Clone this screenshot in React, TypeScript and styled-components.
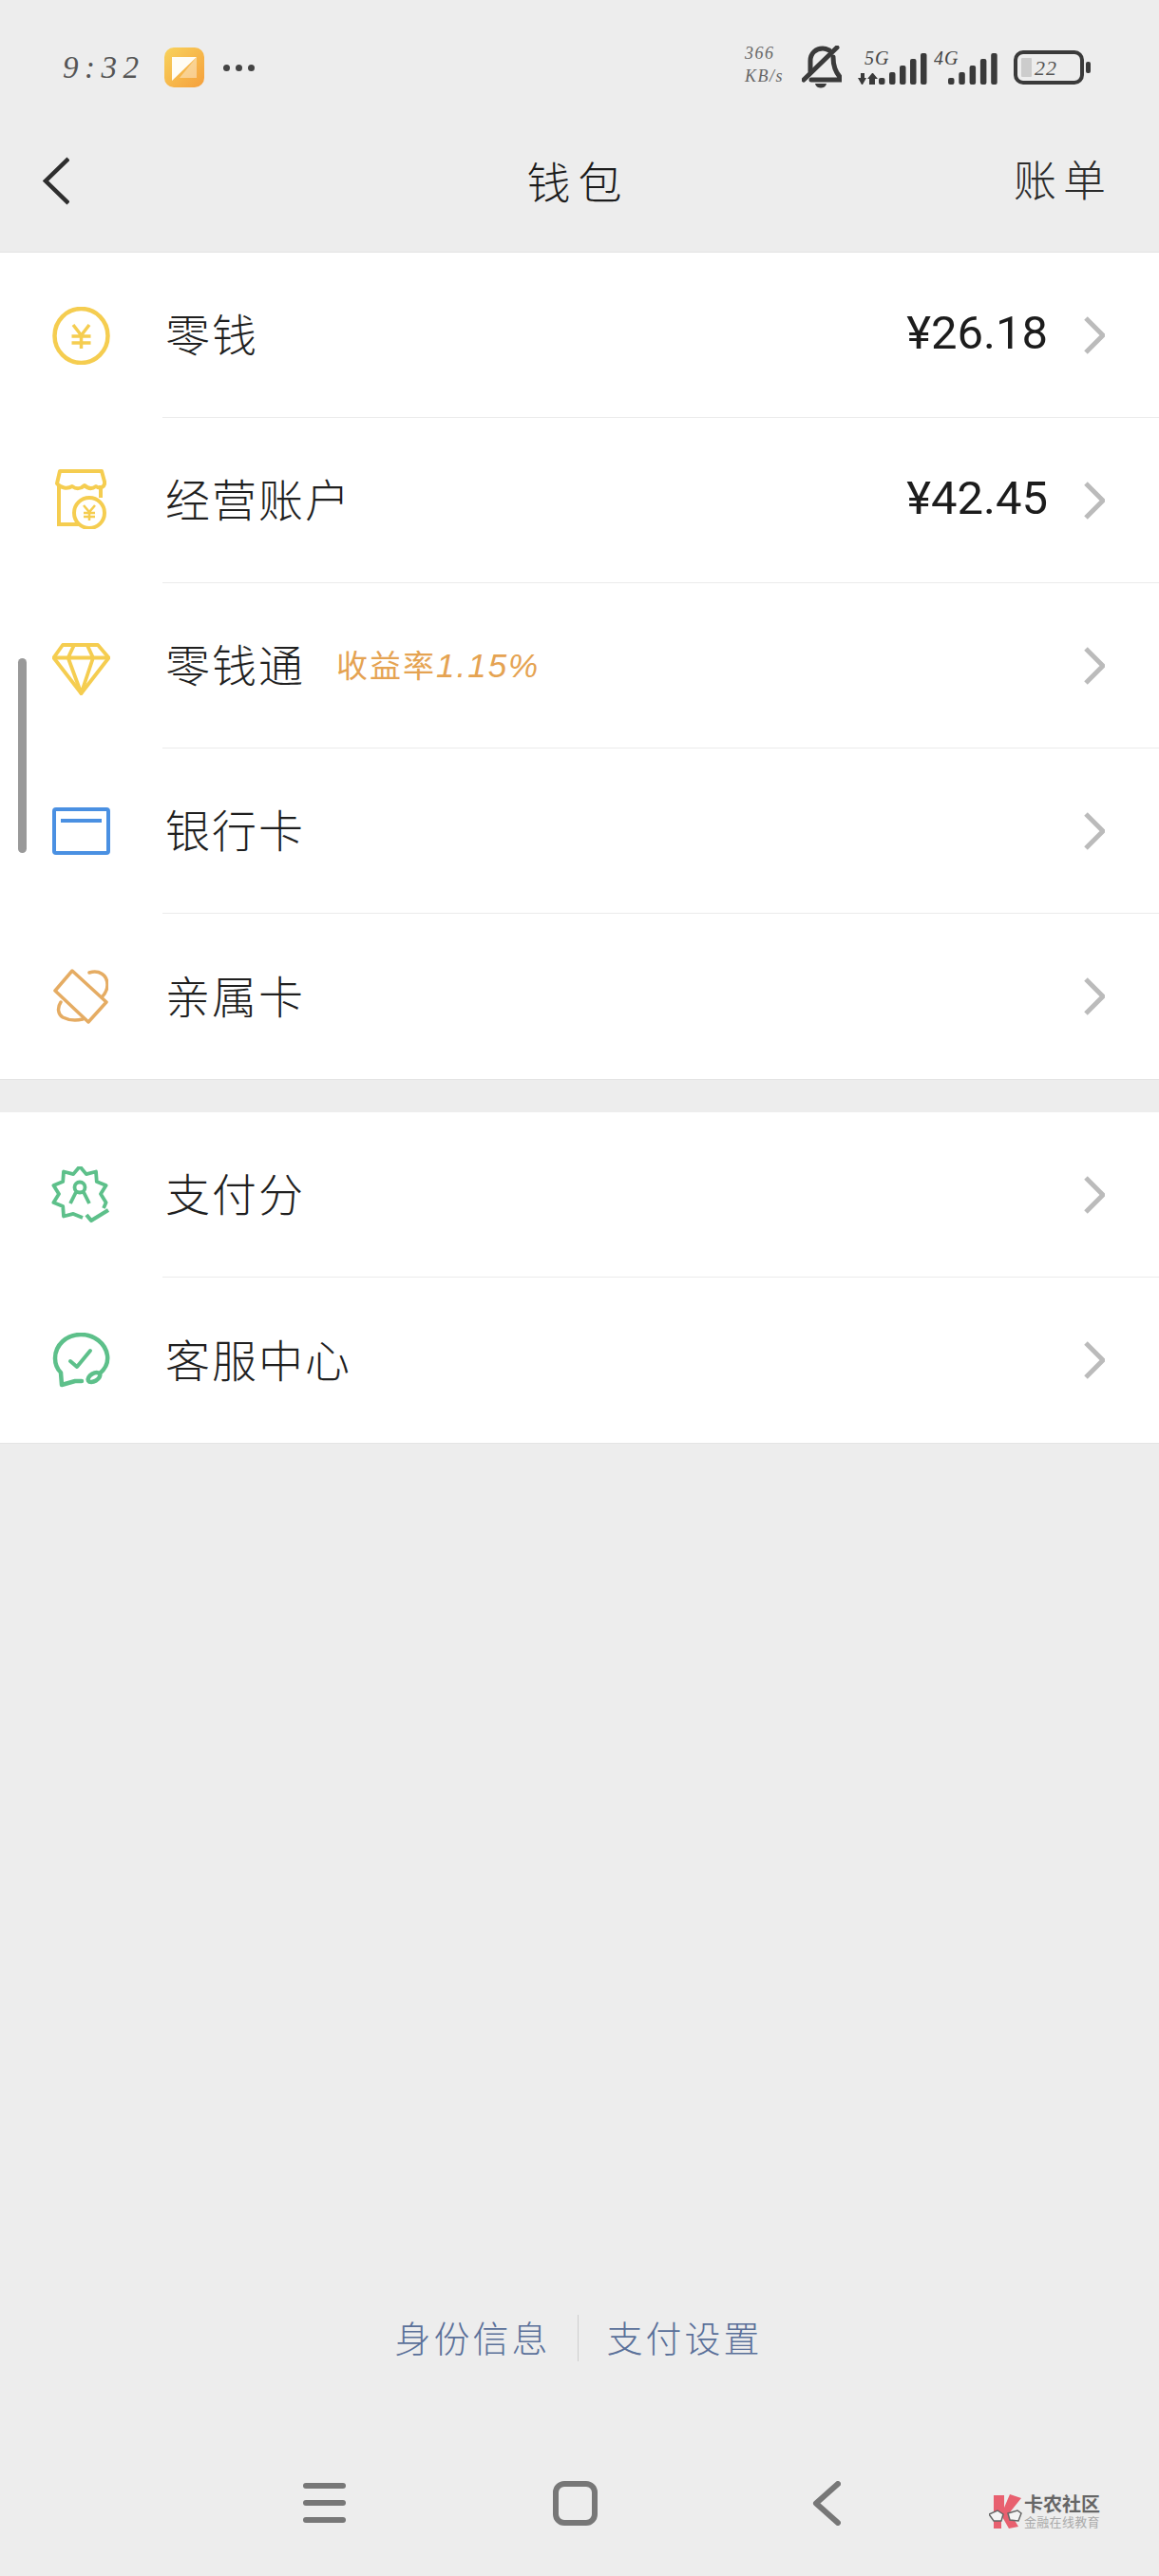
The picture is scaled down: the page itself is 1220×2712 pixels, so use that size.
import React from 'react'
import styled, { createGlobalStyle } from 'styled-components'

const cjk = '"Noto Sans CJK SC", "Noto Sans", sans-serif'

const Global = createGlobalStyle`
  html, body { margin: 0; padding: 0; background: #ededed; }
  * { box-sizing: border-box; }
`

const Page = styled.div`
  position: relative;
  width: 1220px; height: 2712px;
  display: flex; flex-direction: column;
  background: #ededed;
  font-family: ${cjk};
  overflow: hidden;
`

const StatusBar = styled.div`
  height: 124px; padding: 18px 72px 0 66px;
  display: flex; align-items: center; justify-content: space-between;
`

const StatusGroup = styled.div`
  display: flex; align-items: center;
`

const Clock = styled.span`
  font: italic 33px "Liberation Serif", serif;
  letter-spacing: 6.5px; color: #555; width: 107px; white-space: nowrap;
`

const Dots = styled.span`
  display: flex; gap: 6px; margin-left: 20px;
  i { width: 7px; height: 7px; border-radius: 50%; background: #444; }
`

const Speed = styled.div`
  width: 60px; margin-bottom: 6px;
  font: italic 18px/24px "Liberation Serif", serif;
  letter-spacing: 1.5px; color: #666;
  span { display: block; white-space: nowrap; }
`

const NavBar = styled.header`
  height: 142px; padding: 0 56px 8px 45px;
  display: grid; grid-template-columns: 1fr auto 1fr; align-items: center;
  border-bottom: 1px solid #e4e4e4;
`

const NavTitle = styled.h1`
  margin: 0 -8px 4px 0; font-size: 46px; font-weight: 300; letter-spacing: 8px; color: #1c1c1c;
`

const NavAction = styled.span`
  justify-self: end; margin: 0 -7px 6px 0;
  font-size: 45px; font-weight: 300; letter-spacing: 7px; color: #2b2b2b;
`

const Group = styled.section<{ $gap?: number }>`
  margin-top: ${(p) => p.$gap ?? 0}px;
  background: #fff;
  border-bottom: 1px solid #e4e4e4;
`

const Row = styled.div`
  height: 174px; display: flex; align-items: stretch;
`

const IconCell = styled.div<{ $nudge?: number }>`
  width: 171px; flex: none; padding-right: 1px;
  padding-top: ${(p) => Math.max(p.$nudge ?? 0, 0)}px;
  padding-bottom: ${(p) => Math.max(-(p.$nudge ?? 0), 0)}px;
  display: flex; align-items: center; justify-content: center;
`

const RowBody = styled.div<{ $last?: boolean }>`
  flex: 1; min-width: 0; padding-right: 57px;
  display: flex; align-items: center;
  border-bottom: ${(p) => (p.$last ? 'none' : '1px solid #ebebeb')};
`

const Label = styled.span`
  font-size: 47px; font-weight: 300; letter-spacing: 2px; color: #1f1f1f;
  padding: 0 0 6px 3px;
`

const Tag = styled.span`
  margin: 0 0 4px 33px; font-size: 33px; letter-spacing: 2px; color: #e5a352; font-weight: 400;
  em { font: italic 35px "Liberation Sans", sans-serif; letter-spacing: 2px; }
`

const Amount = styled.span`
  margin: 0 38px 4px auto;
  font: 400 49px Roboto, Inter, sans-serif; color: #1c1c1c;
`

const Chevron = styled.svg<{ $auto?: boolean }>`
  flex: none; width: 22px; height: 40px;
  margin-left: ${(p) => (p.$auto ? 'auto' : '0')};
`

const Footer = styled.footer`
  margin-top: auto; display: flex; flex-direction: column;
`

const LinkRow = styled.div`
  height: 49px; display: flex; align-items: center; justify-content: center;
  padding-right: 2px;
`

const FootLink = styled.a`
  font-size: 38px; letter-spacing: 3px; color: #5a7099; font-weight: 300; text-decoration: none;
  padding-bottom: 4px;
`

const Divider = styled.span`
  width: 1px; height: 49px; background: #cfcfcf; margin: 0 30px 0 28px;
`

const SystemBar = styled.nav`
  height: 100px; margin-top: 126px; padding-left: 319px;
  display: flex; align-items: flex-start; gap: 218px;
`

const Scrollbar = styled.div`
  position: absolute; left: 19px; top: 693px;
  width: 9px; height: 205px; border-radius: 5px; background: #999;
`

const Watermark = styled.div`
  position: absolute; left: 1041px; top: 2625px;
  display: flex; gap: 1px; align-items: center;
`

const MarkText = styled.div`
  display: flex; flex-direction: column;
  b { font-size: 20px; line-height: 22px; font-weight: 700; color: #666; white-space: nowrap; }
  span { font-size: 13px; line-height: 16px; color: #aaa; white-space: nowrap; letter-spacing: 0.3px; }
`

const SignalSvg = styled.svg<{ $gap: number }>`
  margin: 0 ${(p) => p.$gap}px 4px 0;
`

// badge outline: ten points, open at the lower right where the check sits
const STAR = (() => {
  const pts: string[] = ['33,54']
  for (let i = 0; i <= 15; i++) {
    const a = ((108 + i * 18) * Math.PI) / 180
    const r = i % 2 ? 29 : 22
    pts.push(`${(30 + r * Math.cos(a)).toFixed(1)},${(29 + r * Math.sin(a)).toFixed(1)}`)
  }
  pts.push('55,44')
  return pts
})()

const yellow = '#f5cd50'
const green = '#5dc08a'
const ink = '#3a3a3a'

const CoinIcon = () => (
  <svg width="61" height="61" viewBox="0 0 61 61" fill="none" stroke={yellow}>
    <ellipse cx="30.500" cy="30.500" rx="28" ry="28.500" strokeWidth="4.500" />
    <path d="M22 19l8.500 11 8.500-11M20.500 31h20M20.500 38h20M30.500 30v14" strokeWidth="3.500" />
  </svg>
)

const StoreIcon = () => (
  <svg width="54" height="63" viewBox="0 0 54 63" fill="none" stroke={yellow} strokeWidth="4">
    <path d="M5 2h44l3 11c1 6-5 8-9 5-4 3-8 3-12-1-4 4-9 4-13 1-5 3-12 2-16-3z" strokeLinejoin="round" />
    <path d="M4 16v42h24M48 17v13" />
    <circle cx="36" cy="46" r="16" fill="#fff" />
    <path d="M30 38l6 7 6-7M30 46h12M30 50h12M36 45v9" strokeWidth="2.500" />
  </svg>
)

const DiamondIcon = () => (
  <svg width="61" height="55" viewBox="0 0 61 55" fill="none" stroke={yellow} strokeWidth="3.800" strokeLinejoin="round">
    <path d="M11 2h37l11.500 13.500L30.500 53 1.500 15.500z" />
    <path d="M1.500 15.500h58M23 2l-6.300 13.500L30.500 53 43 15.500 36.700 2" />
  </svg>
)

const CardIcon = () => (
  <svg width="61" height="50" viewBox="0 0 61 50" fill="none" stroke="#4a90e2" strokeWidth="4">
    <rect x="2" y="2" width="57" height="46" rx="2" />
    <path d="M9 14h43" />
  </svg>
)

const ExclusiveIcon = () => (
  <svg width="58" height="58" viewBox="0 0 58 58" fill="none" stroke="#e5ac63" strokeWidth="3.500" strokeLinejoin="round" strokeLinecap="round">
    <path d="M20 2L2 23l35 33 19-21z" />
    <path d="M38 4c10-3 19 2 19 13 0 5-2 9-6 13M8 35c-4 6-3 13 2 16 6 3 13 4 21 2" />
  </svg>
)

const ScoreIcon = () => (
  <svg width="62" height="60" viewBox="0 0 62 60" fill="none" stroke={green} strokeWidth="3.800" strokeLinejoin="round">
    <polyline points={STAR.join(' ')} />
    <circle cx="30" cy="22" r="5.500" />
    <path d="M26 27l-6 12M34 27l6 12" />
    <path d="M37 51l5 6 18-11" strokeWidth="4.200" />
  </svg>
)

const ServiceIcon = () => (
  <svg width="61" height="58" viewBox="0 0 61 58" fill="none" stroke={green} strokeWidth="4.500" strokeLinejoin="round" strokeLinecap="round">
    <path d="M50 43c6-5 9-12 8-19C56 11 44 2 30 2 15 2 3 13 3 27c0 6 2 11 6 15l1 13 14-4h7" />
    <ellipse cx="44" cy="47" rx="7" ry="4" transform="rotate(-30 44 47)" />
    <path d="M19 30l7 6 14-17" strokeWidth="4" />
  </svg>
)

const RowChevron = ({ auto }: { auto?: boolean }) => (
  <Chevron $auto={auto} viewBox="0 0 22 40" fill="none" stroke="#bbb" strokeWidth="5">
    <path d="M2 2l18 18L2 38" />
  </Chevron>
)

const BackIcon = () => (
  <svg width="28" height="51" viewBox="0 0 28 51" fill="none" stroke="#2e2e2e" strokeWidth="4.500">
    <path d="M27 2L3 25.500 27 49" />
  </svg>
)

const AppIcon = () => (
  <svg width="42" height="42" viewBox="0 0 42 42">
    <defs>
      <linearGradient id="app" x1="0" y1="0" x2="1" y2="1">
        <stop offset="0" stopColor="#f8d35c" />
        <stop offset="1" stopColor="#f59f3c" />
      </linearGradient>
    </defs>
    <rect width="42" height="42" rx="10" fill="url(#app)" />
    <path d="M8 10h26L8 35z" fill="#fffdf5" />
    <path d="M34 10v22H16z" fill="#fff" opacity=".4" />
  </svg>
)

const Bell = () => (
  <svg width="42" height="46" viewBox="0 0 42 46" fill="none" stroke={ink} strokeWidth="5" strokeLinecap="round" style={{ marginRight: 17 }}>
    <path d="M9 27V16C9 8 15 3 22 3c3 0 5 1 7 2" />
    <path d="M33 12c0 6 1 14 7 21v3H10" />
    <path d="M37 2L2 36" />
    <path d="M14 40h12c-1 6-11 6-12 0z" fill={ink} stroke="none" />
  </svg>
)

const bars5 = [7, 13, 20, 27, 33]

const Signal5G = () => (
  <SignalSvg $gap={7} width="73" height="42" viewBox="0 -6 73 42">
    <text x="7" y="14" fontFamily='"Liberation Serif", serif' fontStyle="italic" fontSize="20" letterSpacing="1" fill="#444">5G</text>
    <path d="M0 28h3v-5h4v5h2l-4 7h-1zM12 35v-6h-2l5-6h1l5 6h-3v6z" fill={ink} />
    {bars5.map((h, i) => (
      <rect key={i} x={22 + i * 11} y={35 - h} width="6.500" height={h} rx="2" fill={ink} />
    ))}
  </SignalSvg>
)

const Signal4G = () => (
  <SignalSvg $gap={17} width="67" height="42" viewBox="0 -6 67 42">
    <text x="0" y="14" fontFamily='"Liberation Serif", serif' fontStyle="italic" fontSize="20" letterSpacing="1" fill="#444">4G</text>
    {bars5.map((h, i) => (
      <rect key={i} x={15 + i * 11.300} y={35 - h} width="6.500" height={h} rx="2" fill={ink} />
    ))}
  </SignalSvg>
)

const Battery = () => (
  <svg width="81" height="36" viewBox="0 0 81 36">
    <rect x="2" y="2" width="70" height="32" rx="8" fill="none" stroke={ink} strokeWidth="4" />
    <rect x="8" y="8" width="11" height="20" rx="1" fill="#ccc" />
    <text x="22" y="26" fontFamily='"Liberation Serif", serif' fontStyle="italic" fontSize="22" letterSpacing="1" fill="#555">22</text>
    <rect x="76" y="12" width="5" height="12" rx="2" fill={ink} />
  </svg>
)

const Hamburger = () => (
  <svg width="45" height="46" viewBox="0 0 45 46" fill="#777">
    <rect y="2" width="45" height="6" rx="3" />
    <rect y="20" width="45" height="6" rx="3" />
    <rect y="38" width="45" height="6" rx="3" />
  </svg>
)

const HomeSquare = () => (
  <svg width="47" height="47" viewBox="0 0 47 47" fill="none" stroke="#777" strokeWidth="6">
    <rect x="3" y="3" width="41" height="41" rx="9" />
  </svg>
)

const BackTriangle = () => (
  <svg width="38" height="47" viewBox="0 0 38 47" fill="none" stroke="#777" strokeWidth="6" strokeLinecap="round" strokeLinejoin="round">
    <path d="M35 3L12 23.500 35 44" />
  </svg>
)

const MarkLogo = () => (
  <svg width="36" height="36" viewBox="0 0 36 36">
    <path d="M5 1h11v13l6-14 12 4-12 15 9 15-10 2-8-14v14H5z" fill="#e8606f" />
    <path d="M0 21l9-4 6 4-2 7H5zM20 20l10-3 4 3-3 8-9-1z" fill="#f4f4f4" stroke="#666" strokeWidth="1.500" />
  </svg>
)

export default function App() {
  return (
    <Page>
      <Global />
      <StatusBar>
        <StatusGroup>
          <Clock>9:32</Clock>
          <AppIcon />
          <Dots><i /><i /><i /></Dots>
        </StatusGroup>
        <StatusGroup>
          <Speed>
            <span>366</span>
            <span>KB/s</span>
          </Speed>
          <Bell />
          <Signal5G />
          <Signal4G />
          <Battery />
        </StatusGroup>
      </StatusBar>
      <NavBar>
        <BackIcon />
        <NavTitle>钱包</NavTitle>
        <NavAction>账单</NavAction>
      </NavBar>
      <Group>
        <Row>
          <IconCell><CoinIcon /></IconCell>
          <RowBody>
            <Label>零钱</Label>
            <Amount>¥26.18</Amount>
            <RowChevron />
          </RowBody>
        </Row>
        <Row>
          <IconCell $nudge={-3}><StoreIcon /></IconCell>
          <RowBody>
            <Label>经营账户</Label>
            <Amount>¥42.45</Amount>
            <RowChevron />
          </RowBody>
        </Row>
        <Row>
          <IconCell $nudge={7}><DiamondIcon /></IconCell>
          <RowBody>
            <Label>零钱通</Label>
            <Tag>收益率<em>1.15%</em></Tag>
            <RowChevron auto />
          </RowBody>
        </Row>
        <Row>
          <IconCell><CardIcon /></IconCell>
          <RowBody>
            <Label>银行卡</Label>
            <RowChevron auto />
          </RowBody>
        </Row>
        <Row>
          <IconCell><ExclusiveIcon /></IconCell>
          <RowBody $last>
            <Label>亲属卡</Label>
            <RowChevron auto />
          </RowBody>
        </Row>
      </Group>
      <Group $gap={34}>
        <Row>
          <IconCell><ScoreIcon /></IconCell>
          <RowBody>
            <Label>支付分</Label>
            <RowChevron auto />
          </RowBody>
        </Row>
        <Row>
          <IconCell><ServiceIcon /></IconCell>
          <RowBody $last>
            <Label>客服中心</Label>
            <RowChevron auto />
          </RowBody>
        </Row>
      </Group>
      <Footer>
        <LinkRow>
          <FootLink>身份信息</FootLink>
          <Divider />
          <FootLink>支付设置</FootLink>
        </LinkRow>
        <SystemBar>
          <Hamburger />
          <HomeSquare />
          <BackTriangle />
        </SystemBar>
      </Footer>
      <Scrollbar />
      <Watermark>
        <MarkLogo />
        <MarkText>
          <b>卡农社区</b>
          <span>金融在线教育</span>
        </MarkText>
      </Watermark>
    </Page>
  )
}
